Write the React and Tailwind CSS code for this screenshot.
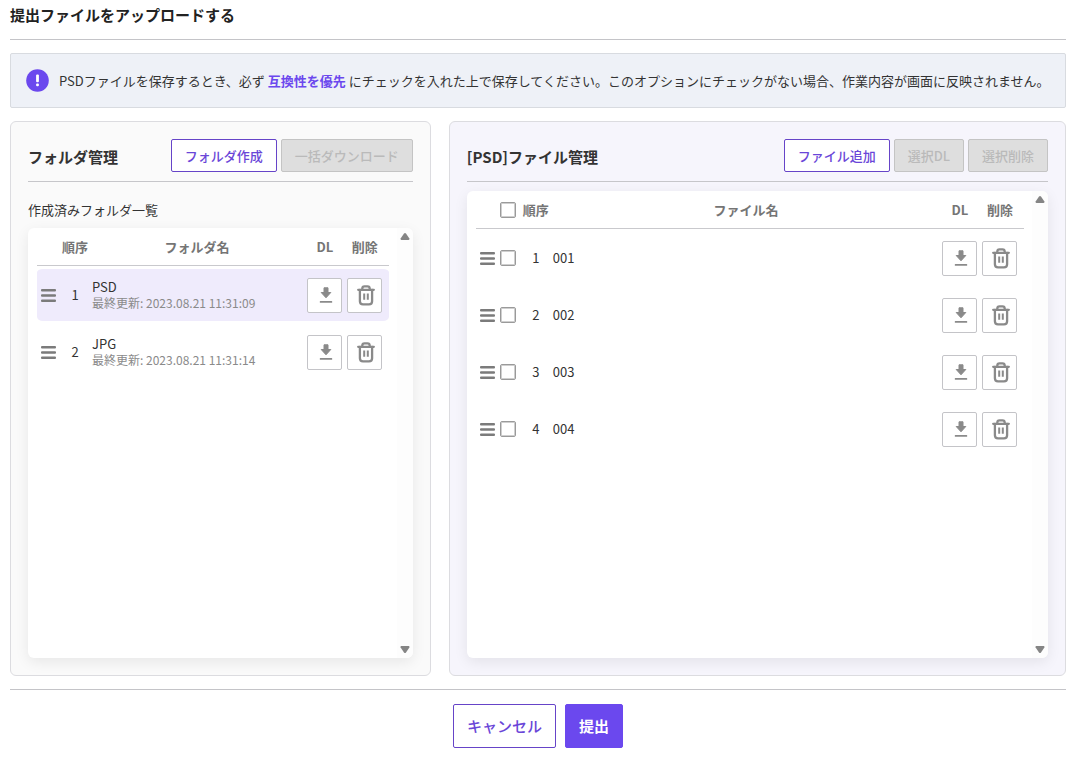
import React, { useState } from "react";
import clsx from "clsx";

const folders = [
  { id: 1, name: "PSD", updatedAt: "2023.08.21 11:31:09" },
  { id: 2, name: "JPG", updatedAt: "2023.08.21 11:31:14" },
];

const files = [
  { id: 1, name: "001" },
  { id: 2, name: "002" },
  { id: 3, name: "003" },
  { id: 4, name: "004" },
];

function DownloadIcon() {
  return (
    <svg width="14" height="16" viewBox="0 0 14 16" fill="#8a8a8a" aria-hidden="true">
      <path d="M5 .8h4v4.7h2.8L7 10.8 2.2 5.500H5z" stroke="#8a8a8a" strokeWidth="1" strokeLinejoin="round" />
      <rect x="0.8" y="14" width="12.4" height="1.8" rx="0.6" />
    </svg>
  );
}

function TrashIcon() {
  return (
    <svg width="18" height="21" viewBox="0 0 18 21" fill="none" stroke="#8a8a8a" strokeWidth="2.3" strokeLinecap="round" strokeLinejoin="round" aria-hidden="true">
      <path d="M1.2 4.8h15.6" />
      <path d="M5.3 4.6V3.6Q5.3 1.3 7.5 1.3h3Q12.7 1.3 12.7 3.6v1" />
      <path d="M2.9 5v11.3q0 3.1 3.1 3.1h6q3.1 0 3.1-3.1V5" />
      <path d="M7.2 8.6v6.2M10.8 8.6v6.2" strokeWidth="2" strokeLinecap="butt" />
    </svg>
  );
}

function DragHandle({ label }) {
  return (
    <button type="button" aria-label={label} className="ml-1 block cursor-grab">
      <svg width="15" height="13" viewBox="0 0 15 13" fill="#7b7b7b" aria-hidden="true">
        <rect width="15" height="2.5" rx="1" />
        <rect y="5.2" width="15" height="2.5" rx="1" />
        <rect y="10.4" width="15" height="2.5" rx="1" />
      </svg>
    </button>
  );
}

function IconButton({ label, children }) {
  return (
    <button type="button" aria-label={label} className="mx-auto flex size-[35px] items-center justify-center rounded-xs border border-[#c4c4c8] bg-white pl-0.5">
      {children}
    </button>
  );
}

function Checkbox({ label, checked, onChange }) {
  return (
    <input
      type="checkbox"
      aria-label={label}
      checked={checked}
      onChange={onChange}
      className="block size-4 appearance-none rounded-xs border border-[#9a9a9a] bg-white shadow-[inset_0_0_0_1px_#cfcfcf] checked:bg-[#6b48ee]"
    />
  );
}

function ToolButton({ disabled, children }) {
  return (
    <button
      type="button"
      disabled={disabled}
      className={clsx(
        "h-[33px] rounded-xs border px-[13px] text-[13px] font-medium whitespace-nowrap",
        disabled ? "border-[#c4c4c4] bg-[#dedede] text-[#bababa]" : "border-[#6644c8] bg-white text-[#6a46d8]"
      )}
    >
      {children}
    </button>
  );
}

function Panel({ title, actions, className, children }) {
  return (
    <section className={clsx("flex min-w-0 flex-col rounded-md border border-[#dcdce0] p-[17px]", className)}>
      <div className="flex items-center justify-between border-b border-[#c6c6ca] pb-[9px]">
        <h2 className="pt-[3px] text-[15px] font-bold text-[#333]">{title}</h2>
        <div className="flex gap-1">{actions}</div>
      </div>
      {children}
    </section>
  );
}

function ListBox({ className, children }) {
  return (
    <div className={clsx("flex grow overflow-hidden rounded-md bg-white pl-[9px] shadow-[0_4px_14px_rgba(0,0,0,0.08)]", className)}>
      <div className="min-w-0 grow pr-2">{children}</div>
      <div className="flex w-4 shrink-0 flex-col items-center justify-between bg-[#fdfdfd] py-1">
        <svg width="10" height="9" viewBox="0 0 10 9" fill="#858585" aria-hidden="true"><path d="M4 1.6q1-1.2 2 0l3.4 5Q9.8 8 8.6 8H1.4Q.2 8 .6 6.6z" /></svg>
        <svg width="10" height="9" viewBox="0 0 10 9" fill="#858585" aria-hidden="true"><path d="M4 7.4q1 1.2 2 0l3.4-5Q9.8 1 8.6 1H1.4Q.2 1 .6 2.4z" /></svg>
      </div>
    </div>
  );
}

const th = "h-[38px] border-b border-[#c9c9cd] p-0 text-center text-[13px] font-bold text-[#757575]";
const td = "h-[57px] border-t-3 border-b-2 border-transparent bg-clip-padding p-0";

function FolderTable() {
  const [activeId, setActiveId] = useState(1);

  return (
    <table className="w-full table-fixed border-separate border-spacing-0">
      <colgroup>
        <col className="w-6" />
        <col className="w-7" />
        <col />
        <col className="w-10" />
        <col className="w-11" />
      </colgroup>
      <thead>
        <tr>
          <th className={th} />
          <th className={clsx(th, "whitespace-nowrap")}>順序</th>
          <th className={th}>フォルダ名</th>
          <th className={th}>DL</th>
          <th className={clsx(th, "pr-1")}>削除</th>
        </tr>
      </thead>
      <tbody>
        {folders.map((folder) => {
          const cell = clsx(td, folder.id === activeId && "bg-[#efebfc]");
          return (
            <tr key={folder.id} onClick={() => setActiveId(folder.id)}>
              <td className={clsx(cell, "rounded-l-md")}><DragHandle label={`${folder.name} 並べ替え`} /></td>
              <td className={clsx(cell, "text-center text-[13px]")}>{folder.id}</td>
              <td className={clsx(cell, "pl-[3px]")}>
                <div className="text-[13px] leading-4">{folder.name}</div>
                <div className="text-[12px] leading-4 whitespace-nowrap text-[#8a8a8a]">最終更新: {folder.updatedAt}</div>
              </td>
              <td className={cell}><IconButton label={`${folder.name} DL`}><DownloadIcon /></IconButton></td>
              <td className={clsx(cell, "rounded-r-md pr-1")}><IconButton label={`${folder.name} 削除`}><TrashIcon /></IconButton></td>
            </tr>
          );
        })}
      </tbody>
    </table>
  );
}

function FileTable() {
  const [selected, setSelected] = useState([]);
  const allSelected = selected.length === files.length;

  const toggle = (id) => setSelected(selected.includes(id) ? selected.filter((s) => s !== id) : [...selected, id]);

  return (
    <table className="w-full table-fixed border-separate border-spacing-0">
      <colgroup>
        <col className="w-6" />
        <col className="w-5" />
        <col className="w-8" />
        <col />
        <col className="w-10" />
        <col className="w-11" />
      </colgroup>
      <thead>
        <tr>
          <th className={th} />
          <th className={th}>
            <Checkbox label="すべて選択" checked={allSelected} onChange={() => setSelected(allSelected ? [] : files.map((f) => f.id))} />
          </th>
          <th className={clsx(th, "whitespace-nowrap")}>順序</th>
          <th className={th}>ファイル名</th>
          <th className={th}>DL</th>
          <th className={clsx(th, "pr-1")}>削除</th>
        </tr>
      </thead>
      <tbody>
        {files.map((file) => (
          <tr key={file.id}>
            <td className={td}><DragHandle label={`${file.name} 並べ替え`} /></td>
            <td className={td}><Checkbox label={file.name} checked={selected.includes(file.id)} onChange={() => toggle(file.id)} /></td>
            <td className={clsx(td, "text-center text-[13px]")}>{file.id}</td>
            <td className={clsx(td, "pl-px text-[13px]")}>{file.name}</td>
            <td className={td}><IconButton label={`${file.name} DL`}><DownloadIcon /></IconButton></td>
            <td className={clsx(td, "pr-1")}><IconButton label={`${file.name} 削除`}><TrashIcon /></IconButton></td>
          </tr>
        ))}
      </tbody>
    </table>
  );
}

export default function App() {
  return (
    <main className="flex min-h-screen flex-col bg-white pt-1 pr-[11px] pb-[15px] pl-2.5 font-['Noto_Sans_CJK_JP',sans-serif] text-[#333]">
      <h1 className="border-b border-[#c4c4c8] pb-[13px] text-[15px] leading-[22px] font-bold text-[#222]">提出ファイルをアップロードする</h1>

      <div className="mt-[13px] flex items-center gap-2.5 rounded-xs border border-[#d8dbe0] bg-[#eef1f7] py-[15px] pl-[15px]">
        <svg width="23" height="23" viewBox="0 0 23 23" className="shrink-0" aria-hidden="true">
          <circle cx="11.5" cy="11.5" r="11.3" fill="#6b48ee" />
          <rect x="10.1" y="5.5" width="2.8" height="7.8" rx="1" fill="#fff" />
          <rect x="10.1" y="14.6" width="2.8" height="2.6" rx="1" fill="#fff" />
        </svg>
        <p className="text-[13px] leading-[21px]">
          PSDファイルを保存するとき、必ず <strong className="font-bold text-[#6b48ee]">互換性を優先</strong> にチェックを入れた上で保存してください。このオプションにチェックがない場合、作業内容が画面に反映されません。
        </p>
      </div>

      <div className="mt-[13px] grid grow grid-cols-[15fr_22fr] gap-[18px]">
        <Panel
          title="フォルダ管理"
          className="bg-[#fafafa]"
          actions={<><ToolButton>フォルダ作成</ToolButton><ToolButton disabled>一括ダウンロード</ToolButton></>}
        >
          <p className="mt-[18px] mb-2 text-[13px] leading-5">作成済みフォルダ一覧</p>
          <ListBox><FolderTable /></ListBox>
        </Panel>
        <Panel
          title="[PSD]ファイル管理"
          className="bg-[#f6f5fc]"
          actions={<><ToolButton>ファイル追加</ToolButton><ToolButton disabled>選択DL</ToolButton><ToolButton disabled>選択削除</ToolButton></>}
        >
          <ListBox className="mt-[9px]"><FileTable /></ListBox>
        </Panel>
      </div>

      <div className="mt-[13px] flex justify-center gap-[9px] border-t border-[#c4c4c8] pt-[14px]">
        <button type="button" className="h-11 rounded-xs border border-[#6644c8] bg-white px-[13px] text-[15px] font-medium text-[#6a46d8]">キャンセル</button>
        <button type="button" className="h-11 rounded-xs border border-[#6b48ee] bg-[#6b48ee] px-[13px] text-[15px] font-bold text-white">提出</button>
      </div>
    </main>
  );
}
